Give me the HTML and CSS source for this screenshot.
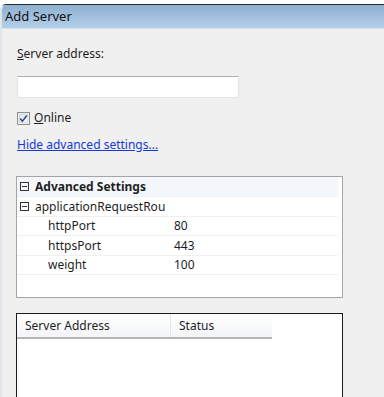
FILE: index.html
```html
<!DOCTYPE html>
<html lang="en">
<head>
    <meta charset="UTF-8">
    <title>Add Server</title>
    <link rel="stylesheet" href="styles.css">
</head>
<body>
    <div class="window">
        <div class="titlebar">Add Server</div>

        <div class="content">
            <label class="field-label" for="address"><u>S</u>erver address:</label>
            <input type="text" id="address" class="textbox">

            <div class="check-row">
                <svg class="checkbox" width="13" height="13" viewBox="0 0 13 13">
                    <defs>
                        <linearGradient id="cb" x1="0" y1="0" x2="1" y2="1">
                            <stop offset="0" stop-color="#dfe3ea"/>
                            <stop offset="1" stop-color="#f7f8fa"/>
                        </linearGradient>
                    </defs>
                    <rect x="0.5" y="0.5" width="12" height="12" fill="#fff" stroke="#8e8f8f"/>
                    <rect x="2" y="2" width="9" height="9" fill="url(#cb)" stroke="#b6bcc6" stroke-width="0.6"/>
                    <path d="M3.2 6.6 L5.4 9.2 L9.8 3.4" fill="none" stroke="#3c4e8c" stroke-width="1.6"/>
                </svg>
                <span><u>O</u>nline</span>
            </div>

            <a class="link" href="#">Hide advanced settings...</a>

            <!-- Eigenschaften -->
            <div class="propgrid">
                <div class="prow category">
                    <span class="toggle"></span>
                    <span class="pname">Advanced Settings</span>
                </div>
                <div class="prow">
                    <span class="toggle"></span>
                    <span class="pname clip">applicationRequestRou</span>
                </div>
                <div class="prow child">
                    <span class="pname">httpPort</span>
                    <span class="pvalue">80</span>
                </div>
                <div class="prow child">
                    <span class="pname">httpsPort</span>
                    <span class="pvalue">443</span>
                </div>
                <div class="prow child">
                    <span class="pname">weight</span>
                    <span class="pvalue">100</span>
                </div>
            </div>

            <!-- Serverliste -->
            <div class="listview">
                <div class="lv-header">
                    <div class="lv-col first">Server Address</div>
                    <div class="lv-col second">Status</div>
                </div>
            </div>
        </div>
    </div>
</body>
</html>
```

FILE: styles.css
```css
body {
    margin: 0;
    background-color: #fff;
    font-family: "Noto Sans", "Open Sans", sans-serif;
    font-size: 12px;
    color: #1e1e1e;
    overflow: hidden;
}
.window {
    margin-top: 4px;
    height: 393px;
    background-color: #f0f0f0;
    border-top: 1px solid #2b2f36;
    border-top-left-radius: 6px;
    border-left: 2px solid #dfe5ec;
}
.titlebar {
    height: 23px;
    line-height: 23px;
    padding-left: 3px;
    font-size: 13px;
    color: #101010;
    background: linear-gradient(#8fb0d0, #b4cfe9);
    border-bottom: 1px solid #d4e2f0;
    border-top-left-radius: 5px;
}
.content {
    padding-left: 15px;
    display: flex;
    flex-direction: column;
    align-items: flex-start;
}
.field-label {
    margin-top: 17px;
    line-height: 16px;
}
.textbox {
    margin-top: 14px;
    width: 222px;
    height: 22px;
    box-sizing: border-box;
    border: 1px solid #e2e3ea;
    border-top-color: #abadb3;
    background-color: #fff;
    padding: 0;
}
.check-row {
    margin-top: 13px;
    display: flex;
    align-items: center;
    gap: 4px;
    line-height: 14px;
}
.checkbox {
    display: block;
}
.link {
    margin-top: 12px;
    line-height: 16px;
    color: #1538d8;
}
.propgrid {
    margin-top: 23px;
    margin-left: -1px;
    width: 321px;
    height: 120px;
    border: 1px solid #a5a5a5;
    background-color: #fff;
    padding-right: 4px;
}
.prow {
    display: flex;
    align-items: center;
    height: 18.5px;
    border-bottom: 1px solid #f0f0f0;
    padding-left: 3px;
}
.prow.category {
    background-color: #f3f7fb;
    font-weight: bold;
    height: 19px;
}
.toggle {
    width: 7px;
    height: 7px;
    border: 1px solid #333;
    margin-right: 6px;
    flex-shrink: 0;
    background: linear-gradient(#333, #333) center / 5px 1px no-repeat;
}
.pname {
    white-space: nowrap;
}
.pname.clip {
    width: 139px;
    overflow: hidden;
}
.child .pname {
    width: 126px;
    padding-left: 28px;
}
.listview {
    margin-top: 15px;
    margin-left: -1px;
    width: 325px;
    height: 90px;
    border: 1px solid #1a1a1a;
    background-color: #fff;
}
.lv-header {
    display: flex;
    width: 255px;
    height: 23px;
    border-bottom: 2px solid #b3b5b8;
    background: linear-gradient(#ffffff, #f3f4f6);
}
.lv-col {
    line-height: 23px;
    padding-left: 8px;
    box-sizing: border-box;
}
.lv-col.first {
    width: 154px;
    border-right: 1px solid #e3e5e8;
}
.lv-col.second {
    flex: 1;
}
```
